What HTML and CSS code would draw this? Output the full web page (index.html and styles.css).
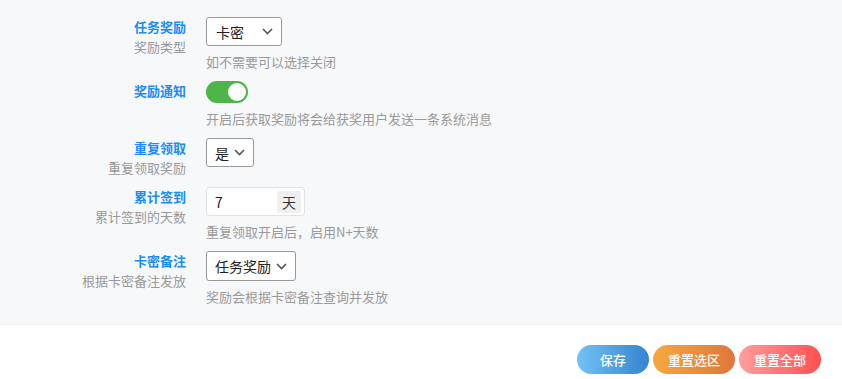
FILE: index.html
```html
<!DOCTYPE html>
<html lang="zh-CN">
  <head>
    <meta charset="UTF-8" />
    <meta name="viewport" content="width=device-width, initial-scale=1.0" />
    <title>任务奖励设置</title>
    <link rel="stylesheet" href="styles.css">
  </head>

  <body>
    <div class="panel">
      <div class="row">
        <div class="label">
          <div class="title">任务奖励</div>
          <div class="sub">奖励类型</div>
        </div>
        <div class="field">
          <div class="select select-wide">
            <span>卡密</span>
            <svg class="chevron" width="11" height="7" viewBox="0 0 11 7"><path d="M1 1l4.5 4.5L10 1" fill="none" stroke="#555" stroke-width="1.6"/></svg>
          </div>
          <div class="hint">如不需要可以选择关闭</div>
        </div>
      </div>

      <div class="row">
        <div class="label">
          <div class="title">奖励通知</div>
        </div>
        <div class="field">
          <div class="switch on"><span class="knob"></span></div>
          <div class="hint">开启后获取奖励将会给获奖用户发送一条系统消息</div>
        </div>
      </div>

      <div class="row">
        <div class="label">
          <div class="title">重复领取</div>
          <div class="sub">重复领取奖励</div>
        </div>
        <div class="field">
          <div class="select">
            <span>是</span>
            <svg class="chevron" width="11" height="7" viewBox="0 0 11 7"><path d="M1 1l4.5 4.5L10 1" fill="none" stroke="#555" stroke-width="1.6"/></svg>
          </div>
        </div>
      </div>

      <div class="row">
        <div class="label">
          <div class="title">累计签到</div>
          <div class="sub">累计签到的天数</div>
        </div>
        <div class="field">
          <div class="input-group">
            <span class="value">7</span>
            <span class="addon">天</span>
          </div>
          <div class="hint">重复领取开启后，启用N+天数</div>
        </div>
      </div>

      <div class="row">
        <div class="label">
          <div class="title">卡密备注</div>
          <div class="sub">根据卡密备注发放</div>
        </div>
        <div class="field">
          <div class="select select-tall">
            <span>任务奖励</span>
            <svg class="chevron" width="11" height="7" viewBox="0 0 11 7"><path d="M1 1l4.5 4.5L10 1" fill="none" stroke="#555" stroke-width="1.6"/></svg>
          </div>
          <div class="hint">奖励会根据卡密备注查询并发放</div>
        </div>
      </div>
    </div>

    <div class="actions">
      <button class="btn btn-save">保存</button>
      <button class="btn btn-reset">重置选区</button>
      <button class="btn btn-clear">重置全部</button>
    </div>
  </body>
</html>
```

FILE: styles.css
```css
body {
  font-family: "Noto Sans CJK SC", "Noto Sans", sans-serif;
  margin: 0;
  padding: 0;
  background-color: #fff;
  font-size: 13px;
}

.panel {
  background-color: #f7f8fa;
  border-bottom: 1px solid #eef0f3;
  padding: 17px 0 17px;
}

.row {
  display: flex;
  margin-bottom: 9px;
}
.row:last-child {
  margin-bottom: 0;
}

.label {
  width: 186px;
  text-align: right;
  line-height: 20px;
}
.title {
  color: #1a8cf5;
  font-weight: bold;
}
.sub {
  color: #999;
}

.field {
  margin-left: 20px;
}
.hint {
  color: #9a9a9a;
  line-height: 20px;
  margin-top: 6px;
}

.select {
  display: inline-flex;
  align-items: center;
  box-sizing: border-box;
  height: 29px;
  padding: 0 8px;
  border: 1px solid #999;
  border-radius: 3px;
  background-color: #fff;
  color: #222;
  font-size: 14px;
}
.select .chevron {
  margin-left: 5px;
}
.select-wide {
  width: 76px;
  padding: 0 8px 0 9px;
  justify-content: space-between;
}
.select-tall {
  height: 30px;
}

.switch {
  width: 42px;
  height: 22px;
  border-radius: 11px;
  background-color: #4cb748;
  position: relative;
}
.switch .knob {
  position: absolute;
  top: 2px;
  right: 2px;
  width: 18px;
  height: 18px;
  border-radius: 50%;
  background-color: #fff;
}

.input-group {
  display: flex;
  align-items: center;
  justify-content: space-between;
  box-sizing: border-box;
  width: 99px;
  height: 29px;
  padding: 0 3px 0 8px;
  border: 1px solid #e3e3e3;
  border-radius: 4px;
  background-color: #fff;
  color: #222;
  font-size: 14px;
}
.addon {
  width: 24px;
  height: 22px;
  line-height: 22px;
  text-align: center;
  background-color: #efefef;
  border-radius: 2px;
  color: #333;
}

.actions {
  display: flex;
  justify-content: flex-end;
  gap: 4px;
  padding: 20px 21px 0 0;
}
.btn {
  height: 29px;
  border: none;
  border-radius: 15px;
  color: #fff;
  font-family: inherit;
  font-size: 13px;
  font-weight: 500;
  cursor: pointer;
}
.btn-save {
  width: 72px;
  background: linear-gradient(to right, #72c2f4, #3584cf);
}
.btn-reset {
  width: 82px;
  background: linear-gradient(to right, #f5a940, #e0763c);
}
.btn-clear {
  width: 82px;
  background: linear-gradient(to right, #ff9d9d, #ff5050);
}
```
